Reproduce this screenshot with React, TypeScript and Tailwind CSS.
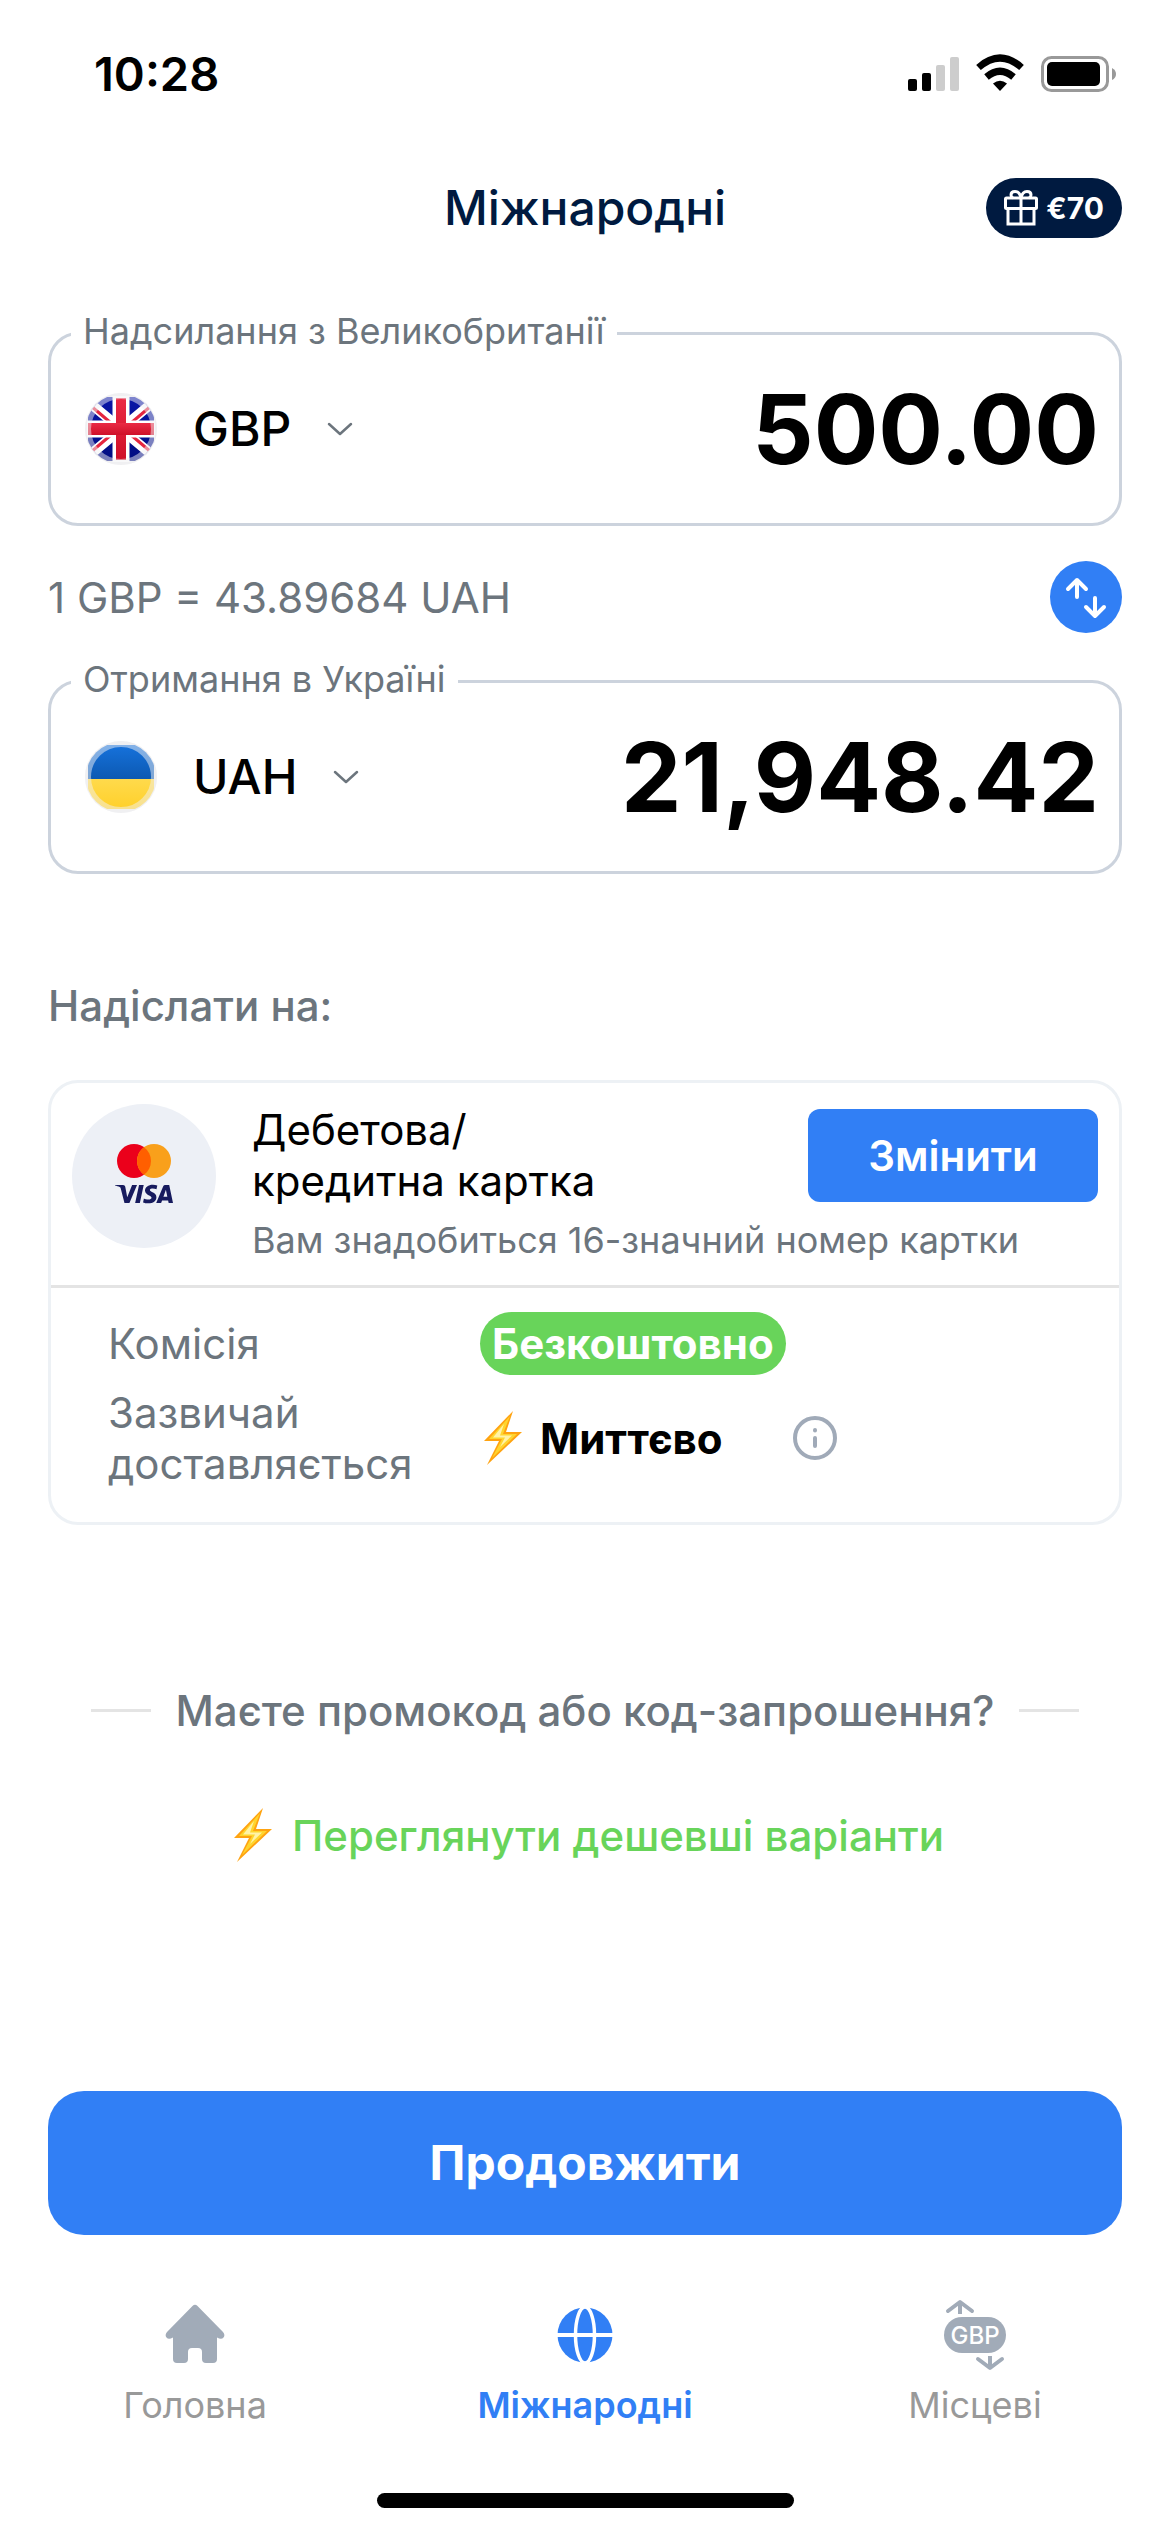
import type { ReactNode } from "react"
import { SiVisa } from "react-icons/si"

function StatusBar() {
  return (
    <div className="flex h-37 items-center justify-between pr-[54px] pl-[94px]">
      <time className="text-[47px] leading-[56px] font-semibold text-black">
        10:28
      </time>
      <svg
        className="h-10 w-[210px]"
        viewBox="0 0 210 40"
        role="img"
        aria-label="Сигнал, Wi-Fi, батарея"
      >
        <rect x="2" y="25" width="9" height="12" rx="2" />
        <rect x="16" y="19" width="9" height="18" rx="2" />
        <rect x="30" y="11" width="9" height="26" rx="2" fill="#cdcdcd" />
        <rect x="44" y="3" width="9" height="34" rx="2" fill="#cdcdcd" />
        <path d="M94 37l-7-7.500q7-5.500 14 0z" />
        <path d="M80.500 23q13.500-11.500 27 0" fill="none" stroke="#000" strokeWidth="7" />
        <path d="M72.500 13.500q21.500-19 43 0" fill="none" stroke="#000" strokeWidth="7" />
        <rect x="136.500" y="3.500" width="65" height="33" rx="9" fill="none" stroke="#999" strokeWidth="3" />
        <rect x="141" y="8" width="53" height="24" rx="5" />
        <path d="M206 14q4 2 4 6t-4 6z" fill="#999" />
      </svg>
    </div>
  )
}

function GiftIcon() {
  return (
    <svg className="h-9 w-[34px]" viewBox="0 0 34 36" fill="none" stroke="#fff" strokeWidth="3" aria-hidden="true">
      <rect x="1.500" y="8" width="31" height="10.500" rx="1" />
      <path d="M4 19v15h26V19M17 8v26" />
      <path d="M17 8C16 3 13.500 1.500 11 1.500S7 3 7 5s1 2.500 2 3M17 8c1-5 3.500-6.500 6-6.500s4 1.500 4 3.500-1 2.500-2 3" />
    </svg>
  )
}

function UkFlag() {
  return (
    <svg className="size-18" viewBox="0 0 72 72" aria-hidden="true">
      <defs>
        <clipPath id="uk-round">
          <circle cx="36" cy="36" r="35" />
        </clipPath>
        <linearGradient id="uk-blue" x1="0" y1="0" x2="0" y2="1">
          <stop offset="0" stopColor="#0a17a8" />
          <stop offset="1" stopColor="#000c80" />
        </linearGradient>
        <linearGradient id="uk-red" x1="0" y1="0" x2="0" y2="1">
          <stop offset="0" stopColor="#ea2a44" />
          <stop offset="1" stopColor="#cf1029" />
        </linearGradient>
      </defs>
      <circle cx="36" cy="36" r="36" fill="#efeff1" />
      <g clipPath="url(#uk-round)">
        <rect x="3" y="4" width="66" height="64" fill="url(#uk-blue)" />
        <path d="M0 6l72 60M72 6L0 66" stroke="#fff" strokeWidth="10" />
        <path d="M6 13l20 17M66 13L46 30M6 59l20-17M66 59L46 42" stroke="#e5263f" strokeWidth="3" />
        <path d="M36 3v66M2 36h68" stroke="#fff" strokeWidth="17" />
        <rect x="31" y="5" width="10" height="62" fill="url(#uk-red)" />
        <rect x="3" y="30" width="66" height="12" fill="url(#uk-red)" />
      </g>
      <circle cx="36" cy="36" r="33" fill="none" stroke="#f1f1f3" strokeOpacity=".5" strokeWidth="6" />
    </svg>
  )
}

function UaFlag() {
  return (
    <svg className="size-18" viewBox="0 0 72 72" aria-hidden="true">
      <defs>
        <clipPath id="ua-round">
          <circle cx="36" cy="36" r="35" />
        </clipPath>
        <linearGradient id="ua-blue" x1="0" y1="0" x2="0" y2="1">
          <stop offset="0" stopColor="#1672dc" />
          <stop offset="1" stopColor="#0c59b2" />
        </linearGradient>
        <linearGradient id="ua-yellow" x1="0" y1="0" x2="0" y2="1">
          <stop offset="0" stopColor="#ffda4c" />
          <stop offset="1" stopColor="#ffd02a" />
        </linearGradient>
      </defs>
      <circle cx="36" cy="36" r="36" fill="#efeff1" />
      <g clipPath="url(#ua-round)">
        <rect x="3" y="4" width="66" height="34" fill="url(#ua-blue)" />
        <rect x="3" y="38" width="66" height="30" fill="url(#ua-yellow)" />
      </g>
      <circle cx="36" cy="36" r="33" fill="none" stroke="#f1f1f3" strokeOpacity=".5" strokeWidth="6" />
    </svg>
  )
}

interface AmountFieldProps {
  id: string
  label: string
  currency: string
  amount: string
  flag: ReactNode
}

function AmountField({ id, label, currency, amount, flag }: AmountFieldProps) {
  return (
    <fieldset className="min-w-0 rounded-[30px] border-3 border-[#ccd3dd] px-5 pb-5">
      <legend className="px-3 pb-1 text-4xl leading-10 text-[#6c757d]">
        <label htmlFor={id}>{label}</label>
      </legend>
      <div className="flex h-37 items-center pl-3.5">
        {flag}
        <div className="ml-9 grid items-center">
          <select
            aria-label="Валюта"
            defaultValue={currency}
            className="col-start-1 row-start-1 appearance-none bg-transparent pr-[62px] text-5xl leading-[60px] font-medium text-black"
          >
            <option>{currency}</option>
          </select>
          <svg
            className="pointer-events-none col-start-1 row-start-1 h-4 w-7 justify-self-end"
            viewBox="0 0 28 16"
            fill="none"
            stroke="#6c757d"
            strokeWidth="2.500"
            strokeLinecap="round"
            strokeLinejoin="round"
            aria-hidden="true"
          >
            <path d="M3 3l11 10L25 3" />
          </svg>
        </div>
        <input
          id={id}
          inputMode="decimal"
          defaultValue={amount}
          className="min-w-0 flex-1 bg-transparent text-right text-8xl leading-[116px] font-bold text-black outline-none"
        />
      </div>
    </fieldset>
  )
}

function BoltIcon() {
  return (
    <svg className="h-[54px] w-[38px] shrink-0" viewBox="0 0 38 54" aria-hidden="true">
      <path d="M29 0L0 30h15L3 54l35-33H22z" fill="#ffa311" />
      <path d="M26 5L5 28h13L8 47l25-24H19z" fill="#ffd52e" />
      <path d="M20 13L9 26.500h12L16 36l12-11.500H16z" fill="#fff3a8" />
    </svg>
  )
}

function CardLogos() {
  return (
    <svg className="size-36 shrink-0" viewBox="0 0 144 144" role="img" aria-label="Mastercard, Visa">
      <circle cx="72" cy="72" r="72" fill="#edf0f6" />
      <circle cx="62" cy="57" r="17" fill="#eb001b" />
      <circle cx="82" cy="57" r="17" fill="#f9a01b" />
      <path d="M72 43.250a17 17 0 0 1 0 27.500 17 17 0 0 1 0-27.500z" fill="#ff5f00" />
      <SiVisa x={43} y={61} size={58} color="#171b5e" />
    </svg>
  )
}

function DeliveryCard() {
  return (
    <section className="mt-[49px] rounded-[30px] border-3 border-[#edf1f5]">
      <div className="flex gap-9 border-b-3 border-[#e4e4e4] p-[21px]">
        <CardLogos />
        <div className="min-w-0 flex-1">
          <div className="flex items-start justify-between">
            <h3 className="text-[42px] leading-[51px] text-black">
              Дебетова/
              <br />
              кредитна картка
            </h3>
            <button
              type="button"
              className="mt-[5px] w-[290px] rounded-xl bg-[#317ff5] py-[21px] text-[42px] leading-[51px] font-semibold text-white"
            >
              Змінити
            </button>
          </div>
          <p className="mt-2.5 text-4xl leading-12 text-[#6c757d]">
            Вам знадобиться 16-значний номер картки
          </p>
        </div>
      </div>
      <dl className="grid grid-cols-[372px_1fr] items-center gap-y-3 pt-6 pb-[33px] pl-[57px] text-[42px] leading-[51px]">
        <dt className="text-[#6c757d]">Комісія</dt>
        <dd className="flex font-bold text-white">
          <span className="rounded-full bg-[#68d45a] px-3 py-1.5">
            Безкоштовно
          </span>
        </dd>
        <dt className="text-[#6c757d]">
          Зазвичай
          <br />
          доставляється
        </dt>
        <dd className="flex items-center pl-1 font-bold text-black">
          <BoltIcon />
          <span className="ml-4.5">Миттєво</span>
          <button type="button" aria-label="Докладніше" className="ml-17.5">
            <svg className="size-11" viewBox="0 0 44 44" fill="none" stroke="#a0aab8" strokeWidth="4" strokeLinecap="round">
              <circle cx="22" cy="22" r="20" />
              <path d="M22 22v8M22 14v.500" />
            </svg>
          </button>
        </dd>
      </dl>
    </section>
  )
}

function HomeIcon() {
  return (
    <svg className="size-18" viewBox="0 0 72 72" fill="#a1abb8" aria-hidden="true">
      <path d="M33.500 7q2.500-2.500 5 0L64 33q2.500 3 .500 5.500T58 38.500V60q0 4-4 4h-7q-4 0-4-4V53q0-4-4-4h-6q-4 0-4 4v7q0 4-4 4h-7q-4 0-4-4V38.500q-4.500 2.500-6.500 0T8 33z" />
    </svg>
  )
}

function GlobeIcon() {
  return (
    <svg className="size-18" viewBox="0 0 72 72" aria-hidden="true">
      <circle cx="36" cy="36" r="27.500" fill="#317ff5" />
      <ellipse cx="36" cy="36" rx="9.500" ry="28" fill="none" stroke="#fff" strokeWidth="3.500" />
      <path d="M8 36h56" stroke="#fff" strokeWidth="4" />
    </svg>
  )
}

function LocalIcon() {
  return (
    <svg className="size-18" viewBox="0 0 72 72" aria-hidden="true">
      <g fill="none" stroke="#a1abb8" strokeWidth="4" strokeLinecap="round" strokeLinejoin="round">
        <path d="M9 12l12-9 12 9M39 60l12 9 12-9" />
      </g>
      <path d="M21 3v12M51 57v11" stroke="#a1abb8" strokeWidth="4" />
      <rect x="5" y="18" width="62" height="36" rx="18" fill="#a1abb8" />
      <text x="36" y="44.500" textAnchor="middle" fontSize="24" fontWeight="500" fill="#fff">
        GBP
      </text>
    </svg>
  )
}

const tabs = [
  { label: "Головна", icon: <HomeIcon />, active: false },
  { label: "Міжнародні", icon: <GlobeIcon />, active: true },
  { label: "Місцеві", icon: <LocalIcon />, active: false },
]

function TabBar() {
  return (
    <nav className="grid grid-cols-3 pt-16">
      {tabs.map((tab) => (
        <a
          key={tab.label}
          href="#"
          aria-current={tab.active ? "page" : undefined}
          className={
            tab.active
              ? "flex flex-col items-center gap-3 text-4xl leading-11 font-semibold text-[#317ff5]"
              : "flex flex-col items-center gap-3 text-4xl leading-11 text-[#999999]"
          }
        >
          {tab.icon}
          {tab.label}
        </a>
      ))}
    </nav>
  )
}

export default function App() {
  return (
    <div className="flex min-h-screen flex-col bg-white font-['Inter','Liberation_Sans',sans-serif]">
      <StatusBar />
      <header className="mt-7 grid h-16 grid-cols-[1fr_auto_1fr] items-center px-12">
        <h1 className="col-start-2 text-5xl leading-[60px] font-medium text-[#001a40]">
          Міжнародні
        </h1>
        <button
          type="button"
          className="flex h-15 items-center gap-2 justify-self-end rounded-full bg-[#001a40] px-[18px] text-3xl leading-9 font-bold text-white"
        >
          <GiftIcon />
          €70
        </button>
      </header>

      <main className="mt-[71px] px-12">
        <AmountField
          id="send"
          label="Надсилання з Великобританії"
          currency="GBP"
          amount="500.00"
          flag={<UkFlag />}
        />
        <div className="mt-[35px] mb-6.5 flex items-center justify-between">
          <p className="text-[42px] leading-[51px] text-[#6c757d]">
            1 GBP = 43.89684 UAH
          </p>
          <button type="button" aria-label="Поміняти валюти місцями">
            <svg className="size-18" viewBox="0 0 72 72" fill="none" stroke="#fff" strokeWidth="4" strokeLinecap="round" strokeLinejoin="round">
              <circle cx="36" cy="36" r="36" fill="#317ff5" stroke="none" />
              <path d="M18 28l9-9 9 9M27 19v17M36 46l9 9 9-9M45 55V37" />
            </svg>
          </button>
        </div>
        <AmountField
          id="receive"
          label="Отримання в Україні"
          currency="UAH"
          amount="21,948.42"
          flag={<UaFlag />}
        />

        <h2 className="mt-[106px] text-[42px] leading-[51px] font-medium text-[#6c757d]">
          Надіслати на:
        </h2>
        <DeliveryCard />

        <div className="mt-40 flex items-center justify-center gap-6 text-[42px] leading-[51px] font-medium">
          <span className="h-[3px] w-15 bg-[#e4e4e4]" />
          <a href="#" className="text-[#6c757d]">
            Маєте промокод або код-запрошення?
          </a>
          <span className="h-[3px] w-15 bg-[#e4e4e4]" />
        </div>
        <a
          href="#"
          className="mt-18 flex items-center justify-center gap-5 pl-2 text-[42px] leading-[51px] font-medium text-[#68d45a]"
        >
          <BoltIcon />
          Переглянути дешевші варіанти
        </a>
      </main>

      <footer className="mt-auto">
        <div className="px-12">
          <button
            type="button"
            className="h-36 w-full rounded-[36px] bg-[#317ff5] text-5xl leading-[60px] font-bold text-white"
          >
            Продовжити
          </button>
        </div>
        <TabBar />
        <div className="mx-auto mt-[66px] mb-6 h-[15px] w-[417px] rounded-full bg-black" />
      </footer>
    </div>
  )
}
